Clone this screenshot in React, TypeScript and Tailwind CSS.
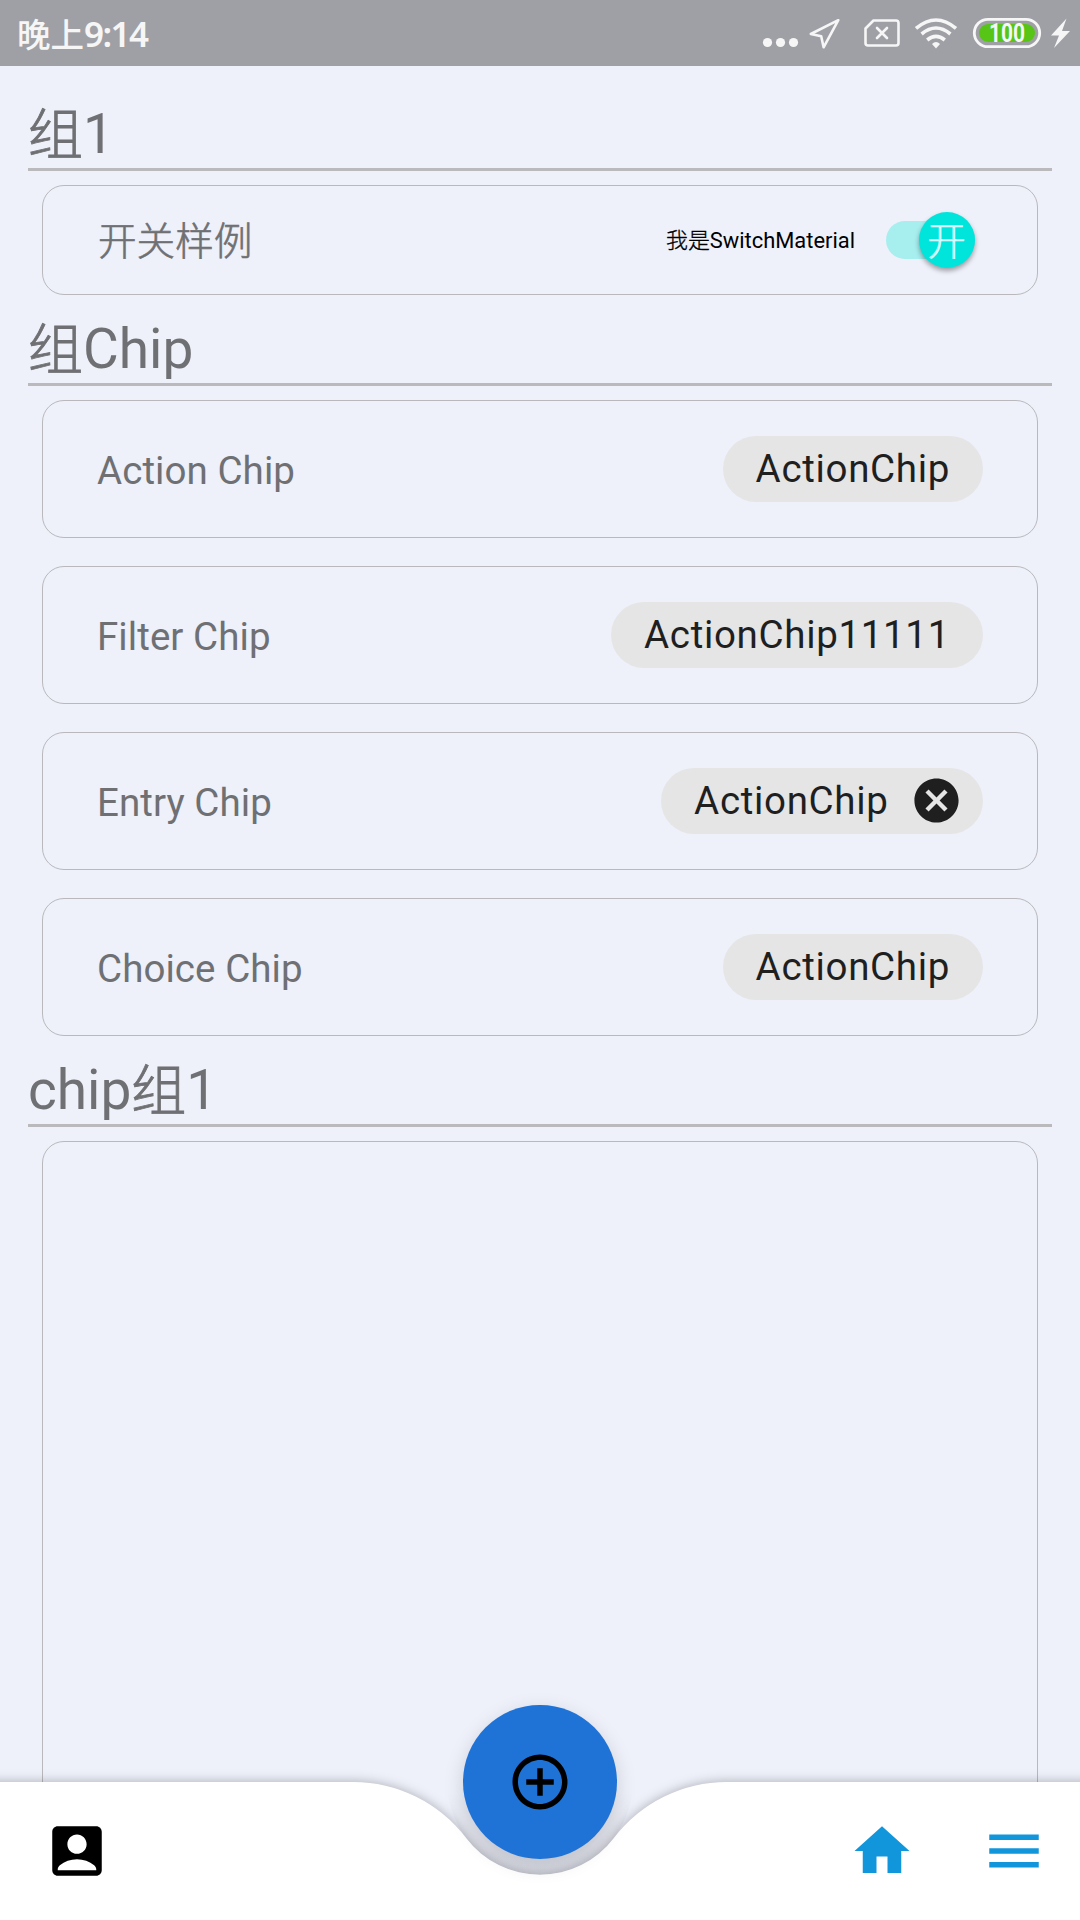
import type { ReactNode } from "react";
import { MdAccountBox, MdAddCircleOutline, MdCancel, MdHome, MdMenu } from "react-icons/md";

function StatusBar() {
  return (
    <header className="flex h-[66px] shrink-0 items-center justify-between bg-[#9fa0a5] text-[#f6f6f6]">
      <div className="flex items-baseline pl-[17px] font-['Noto_Sans_CJK_SC',sans-serif] text-[33.5px] leading-[64px] font-medium">
        <span>晚上</span>
        <span className="font-['Noto_Sans',sans-serif] text-[35px] font-semibold tracking-[-1.6px]">9:14</span>
      </div>
      <svg width="320" height="66" viewBox="760 0 320 66" fill="none" stroke="#f6f6f6">
        <g fill="#f6f6f6" stroke="none">
          <circle cx="767.5" cy="42.5" r="4.6" />
          <circle cx="780.5" cy="42.5" r="4.6" />
          <circle cx="793.5" cy="42.5" r="4.6" />
        </g>
        <path d="M838.3 20.2 L810.8 34 L821.2 36.3 L823.6 47.3 Z" strokeWidth="2.6" strokeLinejoin="round" />
        <path d="M873.5 20.5 H896 Q898.5 20.5 898.5 23 V43 Q898.5 45.5 896 45.5 H868 Q865.5 45.5 865.5 43 V28.5 Z" strokeWidth="2.6" strokeLinejoin="round" />
        <path d="M877 28 L887 38 M887 28 L877 38" strokeWidth="2.6" strokeLinecap="round" />
        <g strokeWidth="3.6">
          <path d="M916 28.4 Q936 11.6 956 28.4" />
          <path d="M921.6 34 Q936 22 950.4 34" />
          <path d="M927.2 40 Q936 32.6 944.8 40" />
        </g>
        <path d="M932 44 Q936 40 940 44 L936 48.5 Z" fill="#f6f6f6" stroke="none" />
        <rect x="974.3" y="19.3" width="65.4" height="27.4" rx="13.7" strokeWidth="2.8" />
        <rect x="979" y="24" width="56" height="18" rx="9" fill="#57c516" stroke="none" />
        <text x="1007" y="42" textAnchor="middle" textLength="36" lengthAdjust="spacingAndGlyphs" className="fill-[#f6f6f6] font-['Roboto',sans-serif] text-[25px] font-bold" stroke="none">
          100
        </text>
        <path d="M1066.5 18.5 L1051 35.5 H1059 L1054 48 L1070 31 H1062 Z" fill="#f6f6f6" stroke="none" />
      </svg>
    </header>
  );
}

function Han({ children }: { children: ReactNode }) {
  return <span className="font-light [-webkit-text-stroke:0.6px_currentColor]">{children}</span>;
}

function HeadingHan({ children }: { children: ReactNode }) {
  return <span className="inline-block translate-y-[1px] font-light [-webkit-text-stroke:0.8px_currentColor]">{children}</span>;
}

function Heading({ children }: { children: ReactNode }) {
  return (
    <h2 className="h-[69px] shrink-0 border-b-3 border-[#bababd] text-[55px] leading-[64px] font-normal text-[#6f7073]">
      {children}
    </h2>
  );
}

function Row({ label, children }: { label: string; children: ReactNode }) {
  return (
    <div className="flex h-[138px] shrink-0 items-center justify-between rounded-[22px] border border-[#b9b9bd] pr-[54px] pl-[54px]">
      <span className="mt-[4px] text-[38.5px] leading-[46px] tracking-[0.07px] text-[#6f7073]">{label}</span>
      {children}
    </div>
  );
}

function Chip({ text, closable = false }: { text: string; closable?: boolean }) {
  return (
    <span
      className={`flex h-[66px] items-center rounded-full bg-[#e5e5e5] pl-[33px] text-[38.5px] leading-[46px] tracking-[0.67px] text-[#1f1f1f] ${
        closable ? "pr-[20.5px]" : "pr-[33px]"
      }`}
    >
      {text}
      {closable && <MdCancel className="mb-[1px] ml-[21px] size-[53px]" />}
    </span>
  );
}

function BottomBar() {
  return (
    <footer className="absolute inset-x-0 bottom-0 h-[138px]">
      <svg className="absolute inset-0 overflow-visible" width="1080" height="138" viewBox="0 0 1080 138">
        <defs>
          <linearGradient id="notch-shade" x1="0" y1="10" x2="0" y2="75" gradientUnits="userSpaceOnUse">
            <stop offset="0" stopColor="#000" stopOpacity="0" />
            <stop offset="1" stopColor="#000" stopOpacity="0.07" />
          </linearGradient>
        </defs>
        <path d="M447.25 0 A92.75 92.75 0 0 0 632.75 0 Z" fill="url(#notch-shade)" />
        <path
          className="drop-shadow-[0_0_6px_rgba(0,0,0,0.28)]"
          d="M-40 0 H353 A142 142 0 0 1 466.1 56.1 A92.75 92.75 0 0 0 613.9 56.1 A142 142 0 0 1 727 0 H1120 V180 H-40 Z"
          fill="#fff"
        />
      </svg>
      <nav className="relative flex h-full items-center pr-[33px] pl-[44px]">
        <MdAccountBox className="size-[66px] text-black" />
        <MdHome className="ml-auto size-[66px] text-[#1296db]" />
        <MdMenu className="ml-[66px] size-[66px] text-[#1296db]" />
      </nav>
      <button className="absolute top-[-77px] left-[463px] flex size-[154px] items-center justify-center rounded-full bg-[#1f72d6] shadow-[0_6px_20px_rgba(0,0,0,0.15)]">
        <MdAddCircleOutline className="size-[66px] text-black" />
      </button>
    </footer>
  );
}

export default function App() {
  return (
    <div className="relative flex h-[1920px] w-[1080px] flex-col overflow-hidden bg-[#eef0fa] font-['Roboto','Noto_Sans_CJK_SC',sans-serif]">
      <StatusBar />
      <main className="flex min-h-0 flex-1 flex-col overflow-hidden px-[28px] pt-[36px]">
        <Heading><HeadingHan>组</HeadingHan>1</Heading>
        <section className="mx-[14px] mt-[14px] mb-[22px] flex h-[110px] shrink-0 items-center rounded-[22px] border border-[#b9b9bd] pr-[62.5px] pl-[55px]">
          <span className="mt-[4px] text-[38.6px] leading-[46px] text-[#6f7073]"><Han>开关样例</Han></span>
          <span className="mt-[2px] ml-auto text-[21.9px] text-black">
            <span className="font-light [-webkit-text-stroke:0.3px_currentColor]">我是</span>SwitchMaterial
          </span>
          <span className="ml-[31px] flex h-[38px] w-[88.5px] items-center justify-end rounded-full bg-[#a7eeef]">
            <span className="flex size-[56px] shrink-0 items-center justify-center rounded-full bg-[#00e5db] pt-[4px] text-[38.5px] leading-[52px] text-[#d8fcff] shadow-[0_3px_5px_rgba(0,0,0,0.35)]">
              <Han>开</Han>
            </span>
          </span>
        </section>
        <Heading><HeadingHan>组</HeadingHan>Chip</Heading>
        <section className="mx-[14px] mt-[14px] mb-[22px] flex shrink-0 flex-col gap-[28px]">
          <Row label="Action Chip"><Chip text="ActionChip" /></Row>
          <Row label="Filter Chip"><Chip text="ActionChip11111" /></Row>
          <Row label="Entry Chip"><Chip text="ActionChip" closable /></Row>
          <Row label="Choice Chip"><Chip text="ActionChip" /></Row>
        </section>
        <Heading>chip<HeadingHan>组</HeadingHan>1</Heading>
        <section className="mx-[14px] mt-[14px] h-[1000px] shrink-0 rounded-[22px] border border-[#b9b9bd]" />
      </main>
      <BottomBar />
    </div>
  );
}
